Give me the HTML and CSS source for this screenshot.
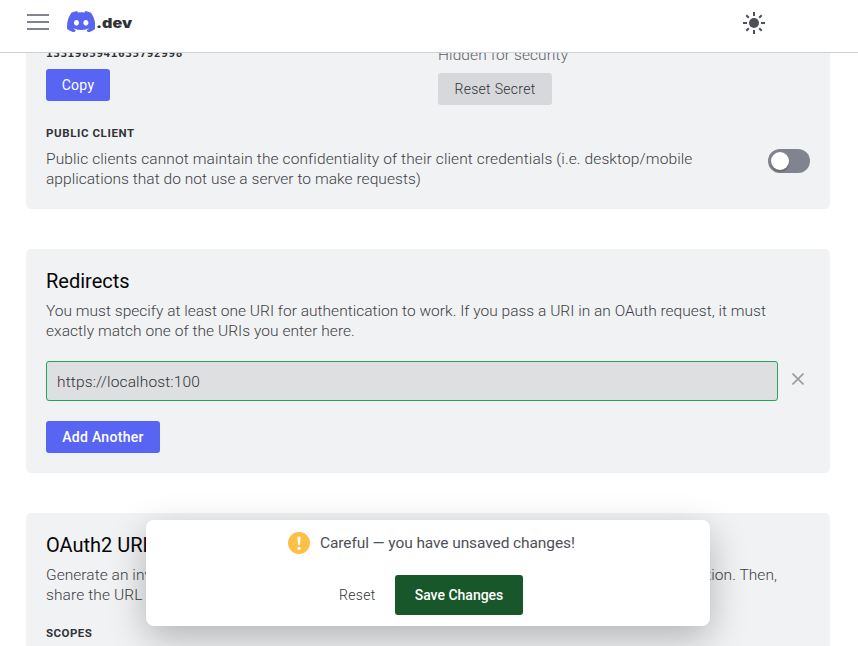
FILE: index.html
```html
<!DOCTYPE html>
<html lang="en">
<head>
<meta charset="utf-8">
<title>OAuth2</title>
<link rel="stylesheet" href="styles.css">
</head>
<body>
<header class="topbar">
  <svg class="menu" width="22" height="16" viewBox="0 0 22 16"><path d="M0 1h22M0 8h22M0 15h22" stroke="#80848e" stroke-width="2"/></svg>
  <div class="brand">
    <svg width="28.4" height="21.5" viewBox="0 0 127.14 96.36"><path fill="#5865f2" d="M107.7,8.07A105.15,105.15,0,0,0,81.47,0a72.06,72.06,0,0,0-3.36,6.83A97.68,97.68,0,0,0,49,6.83,72.37,72.37,0,0,0,45.64,0,105.89,105.89,0,0,0,19.39,8.09C2.79,32.65-1.71,56.6.54,80.21h0A105.73,105.73,0,0,0,32.71,96.36,77.7,77.7,0,0,0,39.6,85.25a68.42,68.42,0,0,1-10.85-5.18c.91-.66,1.8-1.34,2.66-2a75.57,75.57,0,0,0,64.32,0c.87.71,1.76,1.39,2.66,2a68.68,68.68,0,0,1-10.87,5.19,77,77,0,0,0,6.89,11.1A105.25,105.25,0,0,0,126.6,80.22h0C129.24,52.84,122.09,29.11,107.7,8.07ZM42.45,65.69C36.18,65.69,31,60,31,53s5-12.74,11.43-12.74S54,46,53.89,53,48.84,65.69,42.45,65.69Zm42.24,0C78.41,65.69,73.25,60,73.25,53s5-12.74,11.44-12.74S96.23,46,96.12,53,91.08,65.69,84.69,65.69Z"/></svg>
    <span class="brand-name">.dev</span>
  </div>
  <svg class="sun" width="22" height="22" viewBox="-11 -11 22 22"><circle r="5" fill="#4e5058"/><path d="M0-11v4M0 7v4M-11 0h4M7 0h4M-7.7-7.7l2.5 2.5M5.2 5.2l2.5 2.5M-7.7 7.7l2.5-2.5M5.2-5.2l2.5-2.5" stroke="#4e5058" stroke-width="2"/></svg>
</header>
<main class="page">
  <section class="card client">
    <div class="credentials">
      <div class="credential">
        <div class="client-id">1331985941635792998</div>
        <button class="btn primary copy">Copy</button>
      </div>
      <div class="credential">
        <div class="hidden-note">Hidden for security</div>
        <button class="btn neutral">Reset Secret</button>
      </div>
    </div>
    <h3 class="label public-label">Public Client</h3>
    <div class="setting">
      <p class="copytext"><span class="wide">Public clients cannot maintain the confidentiality of their client credentials (i.e. desktop/mobile</span><br>applications that do not use a server to make requests)</p>
      <div class="switch"><div class="knob"></div></div>
    </div>
  </section>
  <section class="card redirects">
    <h2 class="title">Redirects</h2>
    <p class="copytext"><span class="tight">You must specify at least one URI for authentication to work. If you pass a URI in an OAuth request, it must</span><br>exactly match one of the URIs you enter here.</p>
    <div class="uri-row">
      <div class="field">https://localhost:100</div>
      <svg class="remove" width="12" height="12" viewBox="0 0 12 12"><path d="M.5.5l11 11M11.5.5l-11 11" stroke="#9a9ca0" stroke-width="1.6"/></svg>
    </div>
    <button class="btn primary add">Add Another</button>
  </section>
  <section class="card generator">
    <h2 class="title">OAuth2 URL Generator</h2>
    <div class="copytext">
      <p class="gen-first"><span>Generate an invite link for your application</span><span>with the scopes it needs to function. Then,</span></p>
      <p class="wide">share the URL with others!</p>
    </div>
    <h3 class="label scopes">Scopes</h3>
  </section>
</main>
<div class="notice">
  <div class="message">
    <svg width="22" height="22" viewBox="0 0 22 22"><circle cx="11" cy="11" r="11" fill="#fdc045"/><path d="M9.4 4.7h3.2l-.6 8.2h-2z" fill="#fff"/><circle cx="11" cy="16.4" r="1.6" fill="#fff"/></svg>
    <span class="careful">Careful — you have unsaved changes!</span>
  </div>
  <div class="actions">
    <button class="reset">Reset</button>
    <button class="save">Save Changes</button>
  </div>
</div>
</body>
</html>
```

FILE: styles.css
```css
* { box-sizing: border-box; }
body {
  margin: 0;
  height: 646px;
  overflow: hidden;
  background: #fff;
  color: #4e5058;
  font-family: Roboto, "Liberation Sans", sans-serif;
}
h2, h3, p { margin: 0; }
button { border: 0; font-family: inherit; padding: 0; }
.topbar {
  height: 53px;
  padding: 0 93px 7px 27px;
  display: flex;
  align-items: center;
  border-bottom: 1px solid #d0d0d2;
}
.menu { margin-top: -1px; }
.brand { display: flex; align-items: center; margin-left: 18px; margin-top: -2px; }
.brand svg { flex: none; }
.brand-name {
  font: 900 13px/20px Inter, sans-serif;
  color: #313338;
  margin-left: 1px;
  margin-top: 3px;
  transform: scaleX(1.24);
  transform-origin: left;
}
.sun { margin-left: auto; }
.page {
  height: 593px;
  overflow: hidden;
  padding: 0 28px 0 26px;
}
.card {
  background: #f1f2f4;
  border-radius: 5px;
  padding: 20px;
  margin-bottom: 40px;
}
.client { height: 166px; margin-top: -10px; padding-top: 0; }
.credentials { display: grid; grid-template-columns: 392px 1fr; height: 72px; }
.client-id {
  font: 700 11px/16px "DejaVu Sans Mono", monospace;
  letter-spacing: .58px;
  color: #2e3035;
  margin-top: 3px;
}
.hidden-note {
  font-weight: 300;
  font-size: 15.5px;
  line-height: 20px;
  letter-spacing: .1px;
  margin-top: 2px;
  color: #5c5e66;
}
.btn { height: 32px; border-radius: 3px; font-size: 14px; letter-spacing: .3px; display: block; }
.primary { background: #5865f2; color: #fff; font-weight: 500; }
.copy { width: 64px; margin-top: 7px; font-weight: 400; }
.neutral { width: 114px; margin-top: 8px; background: #d7d8dc; color: #313338; font-weight: 300; }
.label {
  font-size: 11.5px;
  line-height: 16px;
  font-weight: 700;
  letter-spacing: .6px;
  text-transform: uppercase;
  color: #313338;
}
.public-label { margin-top: 10px; }
.setting { display: flex; justify-content: space-between; margin-top: 8px; }
.copytext {
  font-size: 15.5px;
  line-height: 20px;
  font-weight: 300;
  letter-spacing: .05px;
  color: #3c3e44;
  white-space: nowrap;
}
.wide { letter-spacing: .11px; }
.tight { letter-spacing: .015px; }
.switch { width: 42px; height: 24px; border-radius: 12px; background: #80848e; padding: 3px; }
.knob { width: 18px; height: 18px; border-radius: 50%; background: #fff; box-shadow: 0 2px 2px rgba(0,0,0,.2); }
.redirects { height: 224px; }
.title { font-size: 20px; line-height: 24px; font-weight: 400; color: #060607; margin-bottom: 8px; white-space: nowrap; }
.uri-row { display: flex; align-items: center; gap: 14px; margin-top: 20px; }
.field {
  width: 732px;
  height: 40px;
  border: 1px solid #23a559;
  border-radius: 3px;
  background: #dedfe1;
  padding: 0 10px;
  font-size: 15.5px;
  letter-spacing: .15px;
  line-height: 40px;
  font-weight: 300;
  color: #313338;
}
.remove { margin-top: -4px; }
.add { width: 114px; margin-top: 20px; }
.generator { height: 240px; margin-bottom: 0; }
.gen-first { width: 731px; display: flex; justify-content: space-between; }
.scopes { margin-top: 20px; letter-spacing: .45px; }
.notice {
  position: absolute;
  left: 146px;
  top: 520px;
  width: 564px;
  height: 106px;
  background: #fff;
  border-radius: 8px;
  box-shadow: 0 12px 36px rgba(0,0,0,.26);
  padding: 12px 0 0;
}
.message { display: flex; align-items: center; padding-left: 142px; gap: 10px; height: 22px; }
.careful { font-size: 15.5px; line-height: 20px; letter-spacing: -.1px; color: #4e5058; font-weight: 400; white-space: nowrap; }
.actions { display: flex; align-items: center; margin-top: 21px; padding-left: 193px; gap: 20px; }
.reset { width: 36px; background: none; font-size: 14px; letter-spacing: .3px; font-weight: 300; color: #313338; white-space: nowrap; }
.save { width: 128px; height: 40px; border-radius: 3px; background: #17572a; color: #fff; font-size: 14px; font-weight: 500; }
```
